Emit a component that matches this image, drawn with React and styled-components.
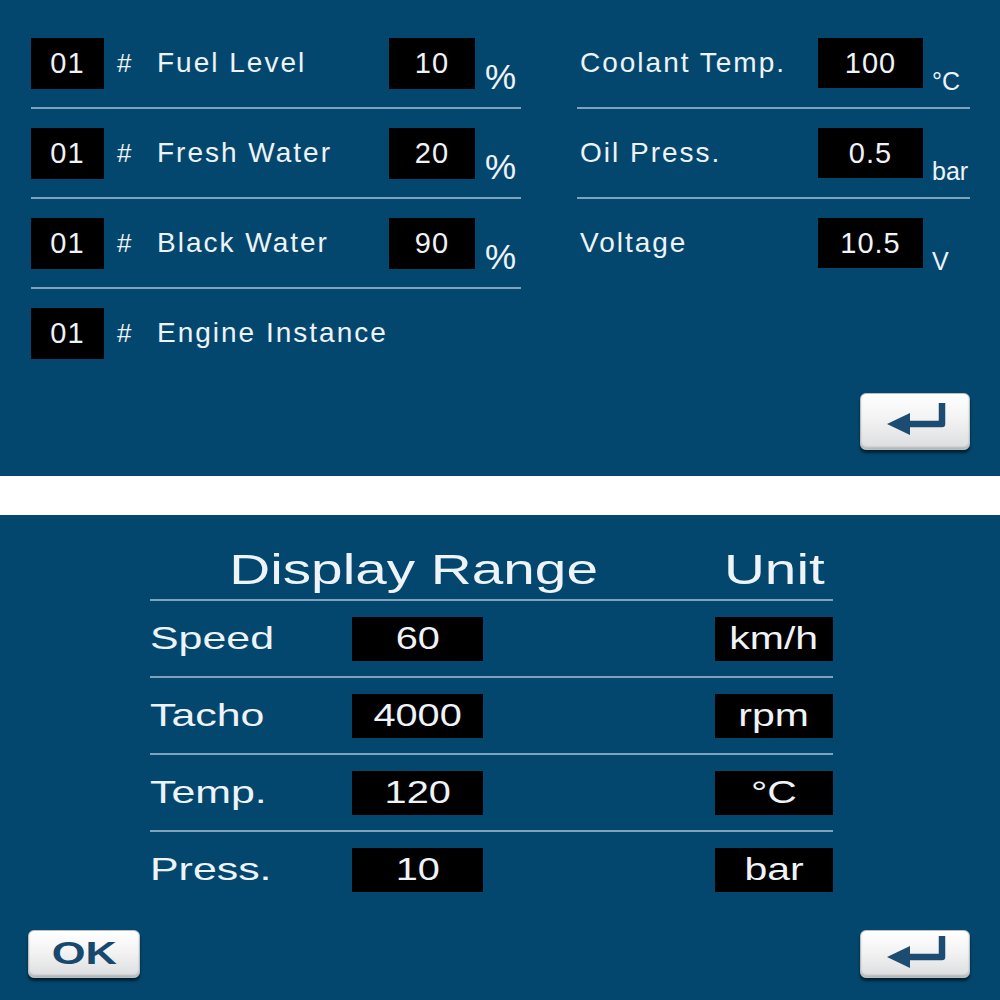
import React from 'react';
import styled, { createGlobalStyle } from 'styled-components';

const GlobalStyle = createGlobalStyle`
  body {
    margin: 0;
    background: #ffffff;
    font-family: 'Liberation Sans', Arial, sans-serif;
  }
`;

const BLUE = '#04476e';
const RULE = '#7fa2be';
const INK = '#eef3f7';

const Page = styled.div`
  display: flex;
  flex-direction: column;
  gap: 39px;
  width: 1000px;
`;

const Panel = styled.section`
  background: ${BLUE};
  box-sizing: border-box;
  display: flex;
  flex-direction: column;
  color: ${INK};
`;

const TopPanel = styled(Panel)`
  height: 476px;
  padding: 19px 30px 0 31px;
`;

const BottomPanel = styled(Panel)`
  height: 485px;
  padding: 26px 30px 0 28px;
`;

const Columns = styled.div`
  display: flex;
  gap: 56px;
  align-items: flex-start;
`;

const Column = styled.div`
  width: ${(p) => p.$w}px;
  display: flex;
  flex-direction: column;
`;

const TankRow = styled.div`
  display: grid;
  grid-template-columns: 73px 40px 1fr 86px 46px;
  align-items: center;
  height: 88px;
  border-bottom: ${(p) => (p.$last ? 'none' : `2px solid ${RULE}`)};
`;

const EngineRow = styled.div`
  display: grid;
  grid-template-columns: 1fr 105px 47px;
  align-items: center;
  height: 88px;
  border-bottom: ${(p) => (p.$last ? 'none' : `2px solid ${RULE}`)};
`;

const Box = styled.div`
  background: #000;
  height: ${(p) => p.$h || 51}px;
  display: flex;
  align-items: center;
  justify-content: center;
  font-size: 29px;
  letter-spacing: 1px;
`;

const Hash = styled.span`
  padding-left: 13px;
  font-size: 26px;
`;

const Label = styled.span`
  padding-left: ${(p) => p.$pad ?? 13}px;
  font-size: 28px;
  letter-spacing: 2px;
  white-space: nowrap;
`;

const Percent = styled.span`
  align-self: start;
  margin-top: 40px;
  padding-left: 10px;
  font-size: 35px;
  line-height: 36px;
`;

const Unit = styled.span`
  align-self: start;
  margin-top: 50px;
  padding-left: 9px;
  font-size: 25px;
  line-height: 25px;
  white-space: nowrap;
`;

const Footer = styled.div`
  display: flex;
  justify-content: ${(p) => p.$justify || 'flex-end'};
  margin-top: ${(p) => p.$top}px;
`;

const KeyButton = styled.button`
  width: ${(p) => p.$w}px;
  height: ${(p) => p.$h}px;
  padding: 0;
  box-sizing: border-box;
  border: 1px solid #b9bec3;
  border-radius: 6px;
  background: linear-gradient(#ffffff 0%, #f3f3f3 45%, #dcdddf 100%);
  box-shadow: 0 3px 3px rgba(0, 0, 0, 0.55), inset 0 -2px 2px rgba(0, 0, 0, 0.18);
  display: flex;
  align-items: center;
  justify-content: center;
  color: #17496f;
  font-family: 'Liberation Sans', Arial, sans-serif;
  font-weight: 700;
  font-size: 31px;
`;

const IconWrap = styled.svg`
  margin-top: -5px;
  margin-left: 4px;
`;

const Stretch = styled.span`
  display: inline-block;
  transform: scaleX(${(p) => p.$x || 1.3});
  transform-origin: ${(p) => p.$origin || 'center'};
  white-space: nowrap;
`;

const Table = styled.div`
  margin-left: 122px;
  width: 683px;
  display: flex;
  flex-direction: column;
`;

const GRID = '202px 131px 1fr 118px';

const HeaderRow = styled.div`
  display: grid;
  grid-template-columns: ${GRID};
  height: 58px;
  border-bottom: 2px solid ${RULE};
  font-size: 42px;
  line-height: 58px;
`;

const Title = styled.div`
  grid-column: 1 / 4;
  text-align: center;
  padding-right: 38px;
`;

const UnitHead = styled.div`
  grid-column: 4;
  text-align: center;
`;

const RangeRow = styled.div`
  display: grid;
  grid-template-columns: ${GRID};
  align-items: center;
  height: 75px;
  border-bottom: ${(p) => (p.$last ? 'none' : `2px solid ${RULE}`)};
  font-size: 32px;
`;

const RangeLabel = styled.div`
  grid-column: 1;
`;

const RangeBox = styled(Box)`
  grid-column: ${(p) => p.$col};
  height: 44px;
  font-size: 32px;
  letter-spacing: 0;
`;

const ReturnIcon = () => (
  <IconWrap width="60" height="32" viewBox="0 0 60 32">
    <path d="M55 0 V21 H20" fill="none" stroke="#1d4c72" strokeWidth="6.5" strokeLinejoin="round" />
    <polygon points="0,21 23,10 23,32" fill="#1d4c72" />
  </IconWrap>
);

const tanks = [
  { name: 'Fuel Level', value: '10' },
  { name: 'Fresh Water', value: '20' },
  { name: 'Black Water', value: '90' },
];

const engine = [
  { name: 'Coolant Temp.', value: '100', unit: '°C' },
  { name: 'Oil Press.', value: '0.5', unit: 'bar' },
  { name: 'Voltage', value: '10.5', unit: 'V' },
];

const ranges = [
  { name: 'Speed', value: '60', unit: 'km/h' },
  { name: 'Tacho', value: '4000', unit: 'rpm' },
  { name: 'Temp.', value: '120', unit: '°C' },
  { name: 'Press.', value: '10', unit: 'bar' },
];

const App = () => {
  return (
    <Page>
      <GlobalStyle />
      <TopPanel>
        <Columns>
          <Column $w={490}>
            {tanks.map((t) => (
              <TankRow key={t.name}>
                <Box>01</Box>
                <Hash>#</Hash>
                <Label>{t.name}</Label>
                <Box>{t.value}</Box>
                <Percent>%</Percent>
              </TankRow>
            ))}
            <TankRow $last>
              <Box>01</Box>
              <Hash>#</Hash>
              <Label>Engine Instance</Label>
            </TankRow>
          </Column>
          <Column $w={393}>
            {engine.map((e, i) => (
              <EngineRow key={e.name} $last={i === engine.length - 1}>
                <Label $pad={3}>{e.name}</Label>
                <Box $h={50}>{e.value}</Box>
                <Unit>{e.unit}</Unit>
              </EngineRow>
            ))}
          </Column>
        </Columns>
        <Footer $top={16}>
          <KeyButton $w={110} $h={57} aria-label="back">
            <ReturnIcon />
          </KeyButton>
        </Footer>
      </TopPanel>

      <BottomPanel>
        <Table>
          <HeaderRow>
            <Title>
              <Stretch $x={1.35}>Display Range</Stretch>
            </Title>
            <UnitHead>
              <Stretch $x={1.35}>Unit</Stretch>
            </UnitHead>
          </HeaderRow>
          {ranges.map((r, i) => (
            <RangeRow key={r.name} $last={i === ranges.length - 1}>
              <RangeLabel>
                <Stretch $origin="left" $x={1.34}>{r.name}</Stretch>
              </RangeLabel>
              <RangeBox $col={2}>
                <Stretch $x={1.24}>{r.value}</Stretch>
              </RangeBox>
              <RangeBox $col={4}>
                <Stretch $x={1.28}>{r.unit}</Stretch>
              </RangeBox>
            </RangeRow>
          ))}
        </Table>
        <Footer $top={23} $justify="space-between">
          <KeyButton $w={112} $h={48}>
            <Stretch $x={1.4}>OK</Stretch>
          </KeyButton>
          <KeyButton $w={110} $h={48} aria-label="back">
            <ReturnIcon />
          </KeyButton>
        </Footer>
      </BottomPanel>
    </Page>
  );
};

export default App;
